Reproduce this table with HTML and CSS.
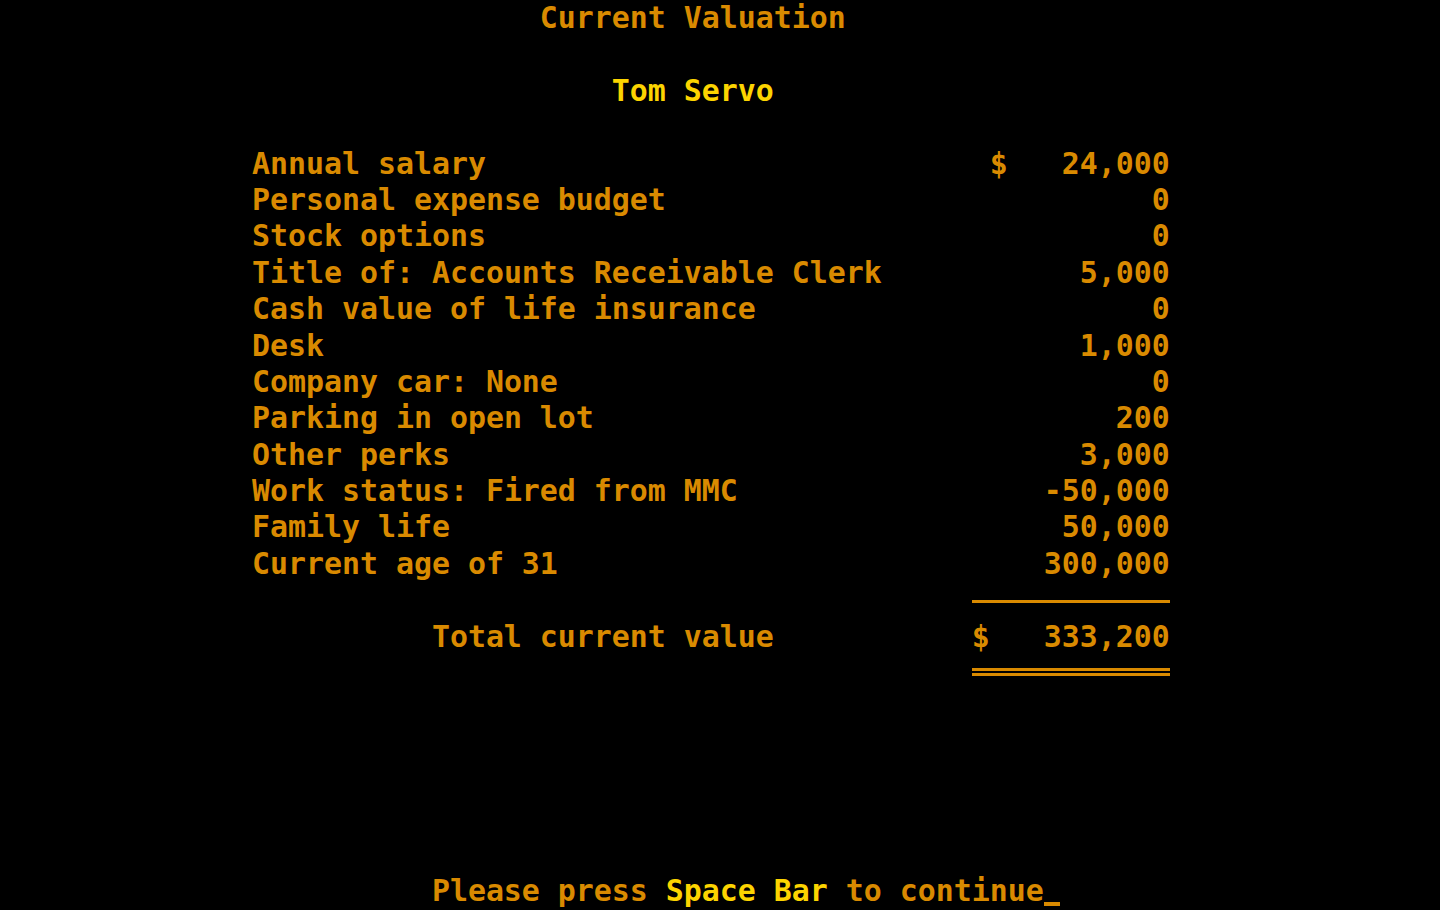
FILE: index.html
```html
<!DOCTYPE html>
<html lang="en">
<head>
<meta charset="utf-8">
<title>Current Valuation</title>
<link rel="stylesheet" href="styles.css">
</head>
<body>
<main class="screen">
  <div class="row title">Current Valuation</div>
  <div class="row"></div>
  <div class="row name">Tom Servo</div>
  <div class="row"></div>

  <div class="row item"><span class="label">Annual salary</span><span class="cur">$</span><span class="val">24,000</span></div>
  <div class="row item"><span class="label">Personal expense budget</span><span class="cur"></span><span class="val">0</span></div>
  <div class="row item"><span class="label">Stock options</span><span class="cur"></span><span class="val">0</span></div>
  <div class="row item"><span class="label">Title of: Accounts Receivable Clerk</span><span class="cur"></span><span class="val">5,000</span></div>
  <div class="row item"><span class="label">Cash value of life insurance</span><span class="cur"></span><span class="val">0</span></div>
  <div class="row item"><span class="label">Desk</span><span class="cur"></span><span class="val">1,000</span></div>
  <div class="row item"><span class="label">Company car: None</span><span class="cur"></span><span class="val">0</span></div>
  <div class="row item"><span class="label">Parking in open lot</span><span class="cur"></span><span class="val">200</span></div>
  <div class="row item"><span class="label">Other perks</span><span class="cur"></span><span class="val">3,000</span></div>
  <div class="row item"><span class="label">Work status: Fired from MMC</span><span class="cur"></span><span class="val">-50,000</span></div>
  <div class="row item"><span class="label">Family life</span><span class="cur"></span><span class="val">50,000</span></div>
  <div class="row item"><span class="label">Current age of 31</span><span class="cur"></span><span class="val">300,000</span></div>

  <div class="row rule"><span class="line single"></span></div>
  <div class="row total"><span class="label">Total current value</span><span class="cur">$</span><span class="val">333,200</span></div>
  <div class="row rule"><span class="line double"></span></div>

  <div class="row"></div>
  <div class="row"></div>
  <div class="row"></div>
  <div class="row"></div>
  <div class="row"></div>
  <div class="row prompt">Please press <span class="hi">Space Bar</span> to continue<span class="cursor"></span></div>
</main>
</body>
</html>
```

FILE: styles.css
```css
html, body {
  margin: 0;
  padding: 0;
  background: #000;
}

.screen {
  width: 1440px;
  height: 910px;
  overflow: hidden;
  font-family: "DejaVu Sans Mono", "Liberation Mono", monospace;
  font-weight: bold;
  font-size: 29.9px;
  color: #d98a00;
  display: flex;
  flex-direction: column;
}

.row {
  height: 36.4px;
  line-height: 36.4px;
  white-space: pre;
  flex: none;
}

.title { padding-left: 30ch; }
.name { padding-left: 34ch; color: #fcd400; }

.item {
  display: grid;
  grid-template-columns: 41ch 1ch 9ch;
  padding-left: 14ch;
}

.total {
  display: grid;
  grid-template-columns: 30ch 1ch 10ch;
  padding-left: 24ch;
}

.val { text-align: right; }

.rule {
  padding-left: 54ch;
}

.line {
  display: block;
  width: 11ch;
}

.line.single {
  margin-top: 18px;
  height: 3px;
  background: #d98a00;
}

.line.double {
  margin-top: 13px;
  border-top: 3px solid #d98a00;
  border-bottom: 3px solid #d98a00;
  height: 2px;
}

.prompt { padding-left: 24ch; }
.hi { color: #fcd400; }

.cursor {
  display: inline-block;
  width: 1ch;
  height: 36.4px;
  vertical-align: top;
  position: relative;
}

.cursor::after {
  content: "";
  position: absolute;
  left: 0;
  width: 16px;
  top: 28.5px;
  height: 4px;
  background: #d98a00;
}
```
